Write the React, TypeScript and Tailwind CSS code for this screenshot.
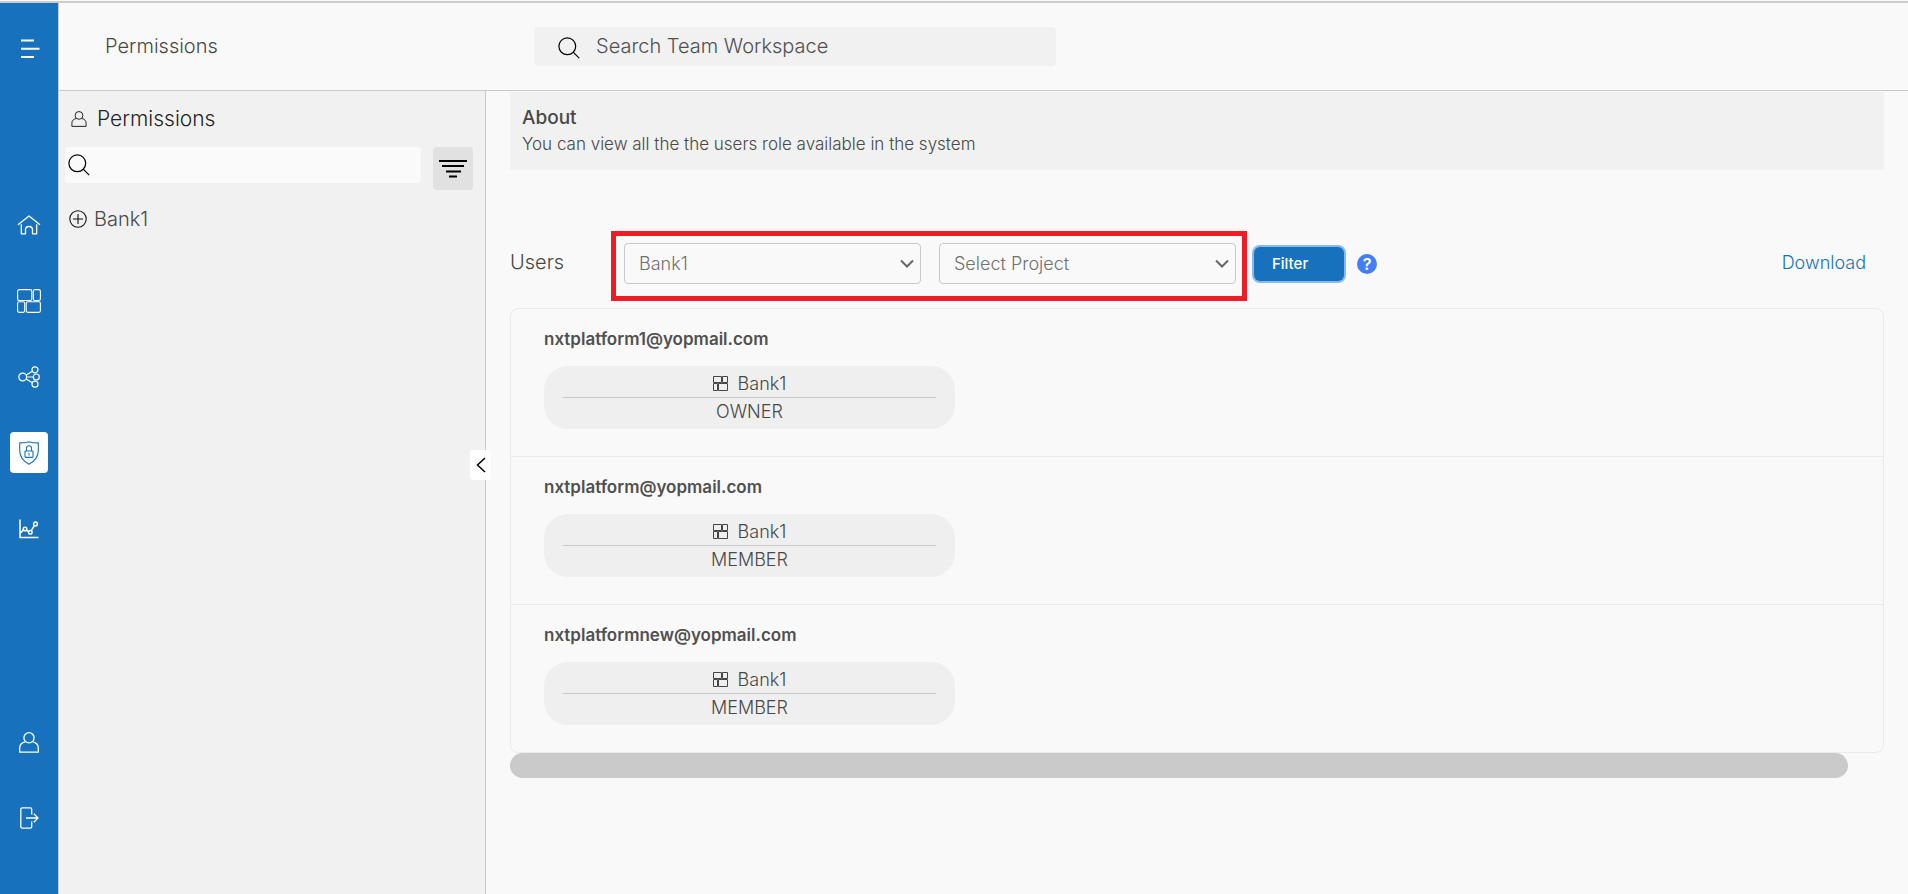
import React from "react";

type IconProps = { className?: string };

const MenuIcon = () => (
  <svg width="20" height="20" viewBox="0 0 20 20" fill="none" stroke="currentColor" strokeWidth="2" aria-hidden="true">
    <path d="M1 1.500h13M1 9.800h18.500M1 18h13" />
  </svg>
);

const HomeIcon = () => (
  <svg width="24" height="20" viewBox="0 0 24 20" fill="none" stroke="currentColor" strokeWidth="1.3" strokeLinejoin="round" aria-hidden="true">
    <path d="M1 9.7 12 1l11 8.7M4.3 9.3v9.5h4.2v-4.1c0-4.3 7-4.3 7 0v4.1h4.2V9.3" />
  </svg>
);

const BlocksIcon = () => (
  <svg width="24" height="24" viewBox="0 0 24 24" fill="none" stroke="currentColor" strokeWidth="1.1" aria-hidden="true">
    <rect x=".6" y=".6" width="14.2" height="10.9" rx="1.6" />
    <rect x="16.3" y=".6" width="7.1" height="10.9" rx="1.6" />
    <rect x=".6" y="12.7" width="7.1" height="10.7" rx="1.6" />
    <rect x="9.2" y="12.7" width="14.2" height="10.7" rx="1.6" />
  </svg>
);

const ShareIcon = () => (
  <svg width="22" height="22" viewBox="0 0 22 22" fill="none" stroke="currentColor" strokeWidth="1.2" aria-hidden="true">
    <circle cx="4.7" cy="11" r="3.9" />
    <circle cx="17" cy="3.8" r="3" />
    <circle cx="18.3" cy="11" r="3" />
    <circle cx="17" cy="18.2" r="3" />
    <path d="m8.200 9 6.200-3.700M8.700 11h6.600M8.200 13l6.200 3.700" />
  </svg>
);

const ShieldIcon = () => (
  <svg width="20" height="24" viewBox="0 0 20 24" fill="none" stroke="currentColor" strokeWidth="1.1" strokeLinejoin="round" aria-hidden="true">
    <path d="M10 .7c2.6.9 6 1.2 9.3 1.2v7.6c0 6.5-3.8 10.7-9.3 13.8C4.5 20.2.7 16 .7 9.500V1.900C4 1.900 7.400 1.600 10 .7Z" />
    <rect x="6" y="10" width="8" height="6.4" rx=".6" />
    <path d="M7.500 10V7.300a2.500 2.500 0 0 1 5 0V10M10 12v2.500" />
  </svg>
);

const ChartIcon = () => (
  <svg width="20" height="20" viewBox="0 0 20 20" fill="none" stroke="currentColor" strokeWidth="1.5" aria-hidden="true">
    <path d="M1 .5V18.500h18.500M1.500 14l3-3.300M7.500 11.200l2.300 1.600M12.300 11.600l3-5" />
    <circle cx="6" cy="10" r="1.8" />
    <circle cx="11.3" cy="13.2" r="1.8" />
    <circle cx="16.5" cy="5" r="1.9" />
  </svg>
);

const UserIcon = ({ className }: IconProps) => (
  <svg className={className} viewBox="0 0 20 21" fill="none" stroke="currentColor" strokeWidth="1.3" strokeLinejoin="round" aria-hidden="true">
    <circle cx="10" cy="5.8" r="5.1" />
    <path d="M6.200 9.900C2.600 10.700.7 12.800.7 16v4.200h18.600V16c0-3.200-1.900-5.300-5.500-6.100" />
  </svg>
);

const LogoutIcon = () => (
  <svg width="19" height="22" viewBox="0 0 19 22" fill="none" stroke="currentColor" strokeWidth="1.3" strokeLinejoin="round" aria-hidden="true">
    <path d="M11.700 7.500V2.200C11.700 1.200 11.200.8 10.300.8H2.200C1.200.8.8 1.200.8 2.200v17.600c0 1 .4 1.400 1.400 1.400h8.100c.9 0 1.400-.4 1.400-1.400v-5.300M6 11h12M13.800 6.800 18 11l-4.200 4.200" />
  </svg>
);

const SearchIcon = () => (
  <svg width="22" height="22" viewBox="0 0 22 22" fill="none" stroke="currentColor" strokeWidth="1.2" className="text-black" aria-hidden="true">
    <circle cx="9.300" cy="9.300" r="8.400" />
    <path d="m15.200 15.200 6 6" />
  </svg>
);

const TilesIcon = () => (
  <svg width="15" height="15" viewBox="0 0 15 15" fill="none" stroke="#444" aria-hidden="true">
    <path d="M.5.500h8v6h-8zM9.500.500h5v6h-5zM.5 7.500h4v7h-4zM5.500 7.500h9v7h-9z" />
  </svg>
);

const navItems = [
  { label: "Home", icon: <HomeIcon />, active: false },
  { label: "Workspaces", icon: <BlocksIcon />, active: false },
  { label: "Connections", icon: <ShareIcon />, active: false },
  { label: "Permissions", icon: <ShieldIcon />, active: true },
  { label: "Analytics", icon: <ChartIcon />, active: false },
];

const users = [
  { email: "nxtplatform1@yopmail.com", bank: "Bank1", role: "OWNER" },
  { email: "nxtplatform@yopmail.com", bank: "Bank1", role: "MEMBER" },
  { email: "nxtplatformnew@yopmail.com", bank: "Bank1", role: "MEMBER" },
];

function NavRail() {
  return (
    <nav className="flex w-[58px] shrink-0 flex-col items-center bg-[#1871bd] text-white">
      <button type="button" aria-label="Menu" className="mt-9 mb-[145px] flex h-5 w-10 items-center justify-center pl-0.5">
        <MenuIcon />
      </button>
      <ul className="flex flex-col gap-[35px]">
        {navItems.map((item) => (
          <li key={item.label}>
            <a
              href="#"
              aria-label={item.label}
              className={
                item.active
                  ? "flex h-[41px] w-[38px] items-center justify-center rounded bg-white text-[#1871bd]"
                  : "flex h-[41px] w-[38px] items-center justify-center"
              }
            >
              {item.icon}
            </a>
          </li>
        ))}
      </ul>
      <div className="mt-auto mb-14 flex flex-col gap-9">
        <a href="#" aria-label="Profile" className="flex h-10 w-10 items-center justify-center">
          <UserIcon className="h-[21px] w-5" />
        </a>
        <a href="#" aria-label="Log out" className="flex h-10 w-10 items-center justify-center">
          <LogoutIcon />
        </a>
      </div>
    </nav>
  );
}

function TopBar() {
  return (
    <header className="flex h-[88px] shrink-0 items-start border-b border-[#c9c9c9]">
      <h1 className="mt-[27px] ml-[46px] w-[429px] shrink-0 text-xl leading-8">Permissions</h1>
      <label className="mt-6 flex h-[39px] w-[522px] items-center gap-4 rounded bg-[#f1f1f1] pl-6">
        <span className="mt-0.5 w-[22px] shrink-0">
          <SearchIcon />
        </span>
        <input
          type="text"
          aria-label="Search Team Workspace"
          placeholder="Search Team Workspace"
          className="mb-0.5 min-w-0 flex-1 bg-transparent text-xl leading-8 outline-none placeholder:text-[#505050]"
        />
      </label>
    </header>
  );
}

function SidePanel() {
  return (
    <aside className="relative w-[427px] shrink-0 border-r border-[#c9c9c9] bg-[#f1f1f1] pl-1.5">
      <h2 className="mt-3 flex h-8 items-center gap-2.5 pl-1.5 text-[21px] leading-8 text-[#222]">
        <UserIcon className="h-4 w-4" />
        Permissions
      </h2>
      <div className="mt-3 flex items-start gap-3 pr-3">
        <label className="flex h-9 flex-1 items-center gap-2 rounded bg-[#fafafa] pl-[3px]">
          <SearchIcon />
          <input type="text" aria-label="Search permissions" className="min-w-0 flex-1 bg-transparent outline-none" />
        </label>
        <button type="button" aria-label="Filter list" className="flex h-[43px] w-10 items-center justify-center rounded bg-[#e1e1e1] text-black">
          <svg width="28" height="18" viewBox="0 0 28 18" fill="none" stroke="currentColor" strokeWidth="2" aria-hidden="true">
            <path d="M0 1h28M3 6h22M7 11.500h15M10 16.500h8" />
          </svg>
        </button>
      </div>
      <button type="button" className="mt-[13px] flex h-8 items-center gap-[7px] pl-1 text-xl leading-8">
        <svg width="18" height="18" viewBox="0 0 18 18" fill="none" stroke="#111" strokeWidth="1.1" aria-hidden="true">
          <circle cx="9" cy="9" r="8.200" />
          <path d="M9 4v10M4 9h10" />
        </svg>
        Bank1
      </button>
      <button
        type="button"
        aria-label="Collapse panel"
        className="absolute top-[359px] -right-1.5 flex h-[30px] w-[21px] items-center justify-center rounded-sm bg-white text-black"
      >
        <svg width="10" height="16" viewBox="0 0 10 16" fill="none" stroke="currentColor" strokeWidth="1.5" aria-hidden="true">
          <path d="M9 1 1.500 8 9 15" />
        </svg>
      </button>
    </aside>
  );
}

function Picker({ label, value }: { label: string; value: string }) {
  return (
    <span className="relative block w-[297px]">
      <select
        aria-label={label}
        defaultValue={value}
        className="h-[41px] w-full appearance-none rounded border border-[#c9c9c9] bg-[#f9f9f9] pr-8 pl-3.5 text-lg leading-6 text-[#707070]"
      >
        <option>{value}</option>
      </select>
      <svg
        width="14"
        height="10"
        viewBox="0 0 14 10"
        fill="none"
        stroke="#666"
        strokeWidth="2"
        className="pointer-events-none absolute top-4 right-[7px]"
        aria-hidden="true"
      >
        <path d="m1 1.500 6 6 6-6" />
      </svg>
    </span>
  );
}

function Toolbar() {
  return (
    <div className="mt-[61px] flex h-[70px] items-center">
      <h3 className="mb-2 w-[101px] shrink-0 text-xl">Users</h3>
      <div className="flex h-[70px] shrink-0 items-start gap-[18px] border-[5px] border-[#ee1c24] pt-[7px] pr-1.5 pl-2">
        <Picker label="Bank" value="Bank1" />
        <Picker label="Project" value="Select Project" />
      </div>
      <button
        type="button"
        className="mb-1 ml-[7px] h-[34px] w-[90px] shrink-0 rounded-md bg-[#1871bd] pl-[18px] text-left text-[15px] font-medium text-white ring-2 ring-[#84bbf5]"
      >
        Filter
      </button>
      <button
        type="button"
        aria-label="Help"
        className="mb-1 ml-[13px] flex size-5 shrink-0 items-center justify-center rounded-full bg-[#447ef5] text-base font-semibold text-white"
      >
        ?
      </button>
      <a href="#" className="mr-[18px] mb-1.5 ml-auto text-lg text-[#1871bd]">
        Download
      </a>
    </div>
  );
}

export default function App() {
  return (
    <div className="flex min-h-screen flex-col bg-[#f9f9f9] font-['Inter',sans-serif] font-light text-[#484848]">
      <div className="mt-px h-0.5 shrink-0 bg-[#cbcccb]" />
      <div className="flex flex-1">
        <NavRail />
        <div className="flex min-w-0 flex-1 flex-col border-l border-[#c9c9c9]">
          <TopBar />
          <div className="flex flex-1">
            <SidePanel />
            <main className="min-w-0 flex-1 pt-px pr-6 pl-6">
              <section className="h-[78px] bg-[#f1f1f1] px-3 pt-3">
                <h2 className="text-[19px] leading-7 font-medium">About</h2>
                <p className="text-[17px] leading-6">You can view all the the users role available in the system</p>
              </section>
              <Toolbar />
              <ul className="mt-[7px] divide-y divide-[#eaeaea] rounded-lg border border-[#eaeaea]">
                {users.map((user) => (
                  <li key={user.email} className="h-[148px] px-[33px] pt-4 last:h-[147px]">
                    <h4 className="text-[17px] leading-7 font-semibold text-[#505050]">{user.email}</h4>
                    <div className="mt-[13px] h-[63px] w-[411px] rounded-3xl bg-[#efefef] px-[19px] pt-1 text-center text-lg">
                      <div className="flex h-7 items-center justify-center gap-2.5 border-b border-[#c9c9c9]">
                        <TilesIcon />
                        {user.bank}
                      </div>
                      <div className="leading-7">{user.role}</div>
                    </div>
                  </li>
                ))}
              </ul>
              <div className="mr-9 h-[25px] rounded-full bg-[#cacaca]" />
            </main>
          </div>
        </div>
      </div>
    </div>
  );
}
